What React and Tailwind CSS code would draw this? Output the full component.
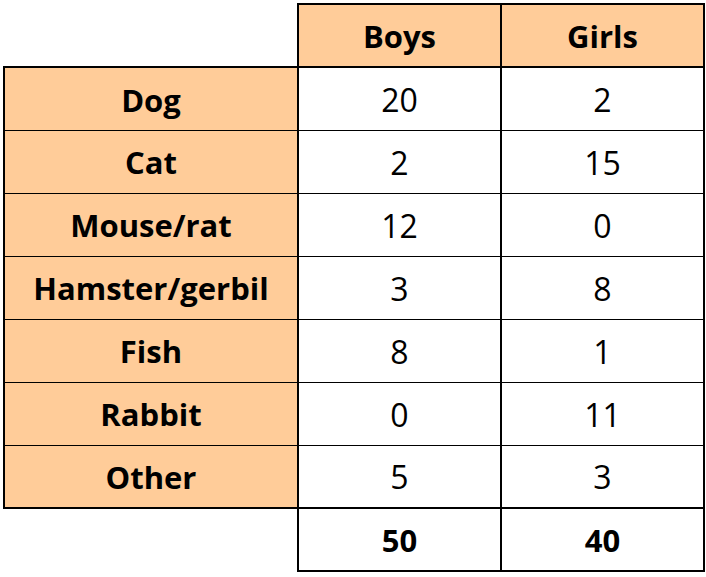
const rows = [
  ['Dog', 20, 2],
  ['Cat', 2, 15],
  ['Mouse/rat', 12, 0],
  ['Hamster/gerbil', 3, 8],
  ['Fish', 8, 1],
  ['Rabbit', 0, 11],
  ['Other', 5, 3],
];

export default function App() {
  return (
    <div className="w-[706px] h-[577px] bg-white pl-[3px] pt-[3px] font-['Open_Sans',sans-serif] text-black">
      <table className="border-collapse table-fixed">
        <colgroup>
          <col className="w-[294px]" />
          <col className="w-[203px]" />
          <col className="w-[203px]" />
        </colgroup>
        <tbody>
          <tr className="h-[63px]">
            <td className="p-0"></td>
            <td className="p-0 pt-[2px] border-2 border-black bg-[#ffcc99] text-center font-bold text-[31px]">Boys</td>
            <td className="p-0 pt-[2px] border-2 border-black bg-[#ffcc99] text-center font-bold text-[31px]">Girls</td>
          </tr>
          {rows.map(([name, boys, girls], i) => {
            const edge = i === 0 ? 'border-t-2' : i === rows.length - 1 ? 'border-b-2' : '';
            return (
              <tr key={name} className="h-[63px]">
                <td className={`p-0 pt-[2px] border border-x-2 ${edge} border-black bg-[#ffcc99] text-center font-bold text-[31px]`}>
                  {name}
                </td>
                <td className={`p-0 pt-[2px] border border-x-2 ${edge} border-black text-center text-[32px]`}>{boys}</td>
                <td className={`p-0 pt-[2px] border border-x-2 ${edge} border-black text-center text-[32px]`}>{girls}</td>
              </tr>
            );
          })}
          <tr className="h-[63px]">
            <td className="p-0"></td>
            <td className="p-0 pt-[2px] border-2 border-black text-center font-bold text-[31px]">50</td>
            <td className="p-0 pt-[2px] border-2 border-black text-center font-bold text-[31px]">40</td>
          </tr>
        </tbody>
      </table>
    </div>
  );
}
